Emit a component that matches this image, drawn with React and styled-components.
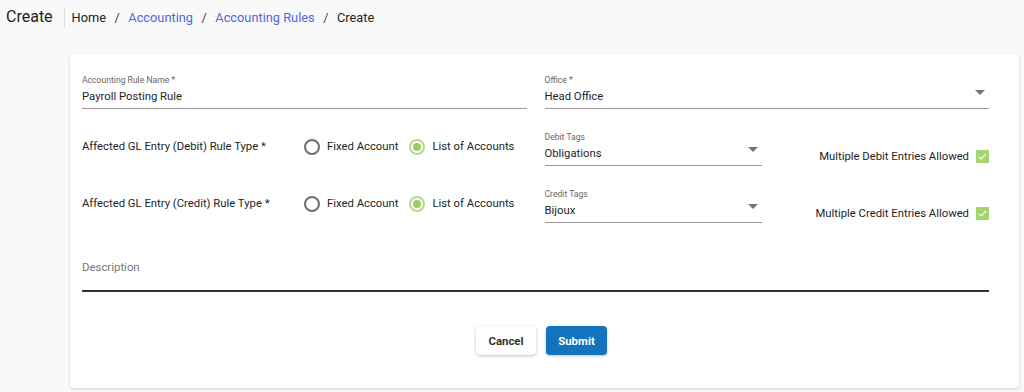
import React from "react";
import styled, { createGlobalStyle } from "styled-components";

const Global = createGlobalStyle`
  html, body { margin: 0; padding: 0; background: #f9f9f9; }
  body { font-family: Roboto, "Noto Sans", Arial, sans-serif; color: #222; }
  * { box-sizing: border-box; }
`;

const Page = styled.div`
  width: 1024px;
  height: 392px;
  overflow: hidden;
  background: #f9f9f9;
`;

const Header = styled.header`
  display: flex;
  align-items: center;
  height: 34px;
  padding: 0 0 0 6px;
`;

const PageTitle = styled.h1`
  margin: 0;
  font-size: 16px;
  font-weight: 400;
  color: #222;
  padding-right: 11px;
  border-right: 1px solid #dcdcdc;
  line-height: 20px;
`;

const Crumbs = styled.nav`
  display: flex;
  align-items: center;
  gap: 8.5px;
  padding-left: 7px;
  font-size: 12.8px;
  color: #222;
`;

const Crumb = styled.span`
  color: ${(p) => (p.$link ? "#5566dd" : "#222")};
`;

const Sep = styled.span`
  color: #444;
`;

const Card = styled.section`
  margin: 20px 5px 0 70px;
  background: #fff;
  border-radius: 4px;
  box-shadow: 0 1px 3px rgba(0, 0, 0, 0.18);
  padding: 20px 30px 33px 12px;
`;

const Grid = styled.div`
  display: grid;
  grid-template-columns: 1fr 1fr;
  column-gap: 18px;
  row-gap: 22px;
`;

const Field = styled.div`
  display: flex;
  flex-direction: column;
  width: ${(p) => p.$w || "auto"};
  border-bottom: 1px solid #9a9a9a;
`;

const Label = styled.label`
  font-size: 8.6px;
  line-height: 12px;
  color: #666;
`;

const ValueRow = styled.div`
  display: flex;
  align-items: flex-start;
  justify-content: space-between;
  height: 22px;
`;

const Value = styled.span`
  font-size: 11.3px;
  line-height: 22px;
  color: #1e1e1e;
`;

const Arrow = styled.span`
  width: 0;
  height: 0;
  margin: 4px 4px 0 0;
  border-left: 5px solid transparent;
  border-right: 5px solid transparent;
  border-top: 5px solid #757575;
`;

const RuleRow = styled.div`
  display: flex;
  align-items: center;
  height: 100%;
  padding-bottom: 4px;
`;

const RuleLabel = styled.span`
  width: 222px;
  font-size: 11.3px;
  color: #1e1e1e;
`;

const Radios = styled.div`
  display: flex;
  align-items: center;
  gap: 11px;
`;

const RadioOpt = styled.label`
  display: flex;
  align-items: center;
  gap: 7px;
  font-size: 11.3px;
  color: #1e1e1e;
`;

const RadioCircle = styled.span`
  width: 16px;
  height: 16px;
  border-radius: 50%;
  border: 2px solid ${(p) => (p.$on ? "#b3d98a" : "#6e6e6e")};
  display: flex;
  align-items: center;
  justify-content: center;
  &::after {
    content: "";
    width: 8px;
    height: 8px;
    border-radius: 50%;
    background: ${(p) => (p.$on ? "#9ccc65" : "transparent")};
  }
`;

const TagRow = styled.div`
  display: flex;
  align-items: flex-end;
  justify-content: space-between;
`;

const CheckLabel = styled.label`
  display: flex;
  align-items: center;
  gap: 7px;
  font-size: 11.3px;
  color: #1e1e1e;
  margin-bottom: 3px;
`;

const CheckBox = styled.span`
  width: 13px;
  height: 13px;
  background: #a5d46f;
  border-radius: 1px;
  display: flex;
  align-items: center;
  justify-content: center;
`;

const Description = styled.div`
  margin-top: 25px;
  height: 44px;
  display: flex;
  align-items: flex-start;
  padding-top: 12px;
  border-bottom: 2px solid #333;
  font-size: 11.4px;
  color: #777;
`;

const Actions = styled.div`
  display: flex;
  justify-content: center;
  gap: 10px;
  margin-top: 34px;
  padding-left: 12px;
`;

const Button = styled.button`
  height: 29px;
  width: ${(p) => p.$w};
  border: none;
  border-radius: 4px;
  font-family: Roboto, Arial, sans-serif;
  font-size: 11.4px;
  font-weight: 700;
  color: ${(p) => (p.$primary ? "#fff" : "#333")};
  background: ${(p) => (p.$primary ? "#1473bd" : "#fff")};
  box-shadow: 0 1px 3px rgba(0, 0, 0, 0.25);
`;

const Check = () => (
  <svg width="11" height="11" viewBox="0 0 24 24" fill="none">
    <path d="M4 12.5l5 5L20 6.5" stroke="#fff" strokeWidth="2.4" />
  </svg>
);

const Radio = ({ on, children }) => (
  <RadioOpt>
    <RadioCircle $on={on} />
    {children}
  </RadioOpt>
);

const Rule = ({ label }) => (
  <RuleRow>
    <RuleLabel>{label}</RuleLabel>
    <Radios>
      <Radio>Fixed Account</Radio>
      <Radio on>List of Accounts</Radio>
    </Radios>
  </RuleRow>
);

const Tags = ({ label, value, check }) => (
  <TagRow>
    <Field $w="217px">
      <Label>{label}</Label>
      <ValueRow>
        <Value>{value}</Value>
        <Arrow />
      </ValueRow>
    </Field>
    <CheckLabel>
      {check}
      <CheckBox>
        <Check />
      </CheckBox>
    </CheckLabel>
  </TagRow>
);

export default function App() {
  return (
    <Page>
      <Global />
      <Header>
        <PageTitle>Create</PageTitle>
        <Crumbs>
          <Crumb>Home</Crumb>
          <Sep>/</Sep>
          <Crumb $link>Accounting</Crumb>
          <Sep>/</Sep>
          <Crumb $link>Accounting Rules</Crumb>
          <Sep>/</Sep>
          <Crumb>Create</Crumb>
        </Crumbs>
      </Header>
      <Card>
        <Grid>
          <Field>
            <Label>Accounting Rule Name *</Label>
            <ValueRow>
              <Value>Payroll Posting Rule</Value>
            </ValueRow>
          </Field>
          <Field>
            <Label>Office *</Label>
            <ValueRow>
              <Value>Head Office</Value>
              <Arrow />
            </ValueRow>
          </Field>
          <Rule label="Affected GL Entry (Debit) Rule Type *" />
          <Tags label="Debit Tags" value="Obligations" check="Multiple Debit Entries Allowed" />
          <Rule label="Affected GL Entry (Credit) Rule Type *" />
          <Tags label="Credit Tags" value="Bijoux" check="Multiple Credit Entries Allowed" />
        </Grid>
        <Description>Description</Description>
        <Actions>
          <Button $w="60px">Cancel</Button>
          <Button $w="61px" $primary>Submit</Button>
        </Actions>
      </Card>
    </Page>
  );
}
